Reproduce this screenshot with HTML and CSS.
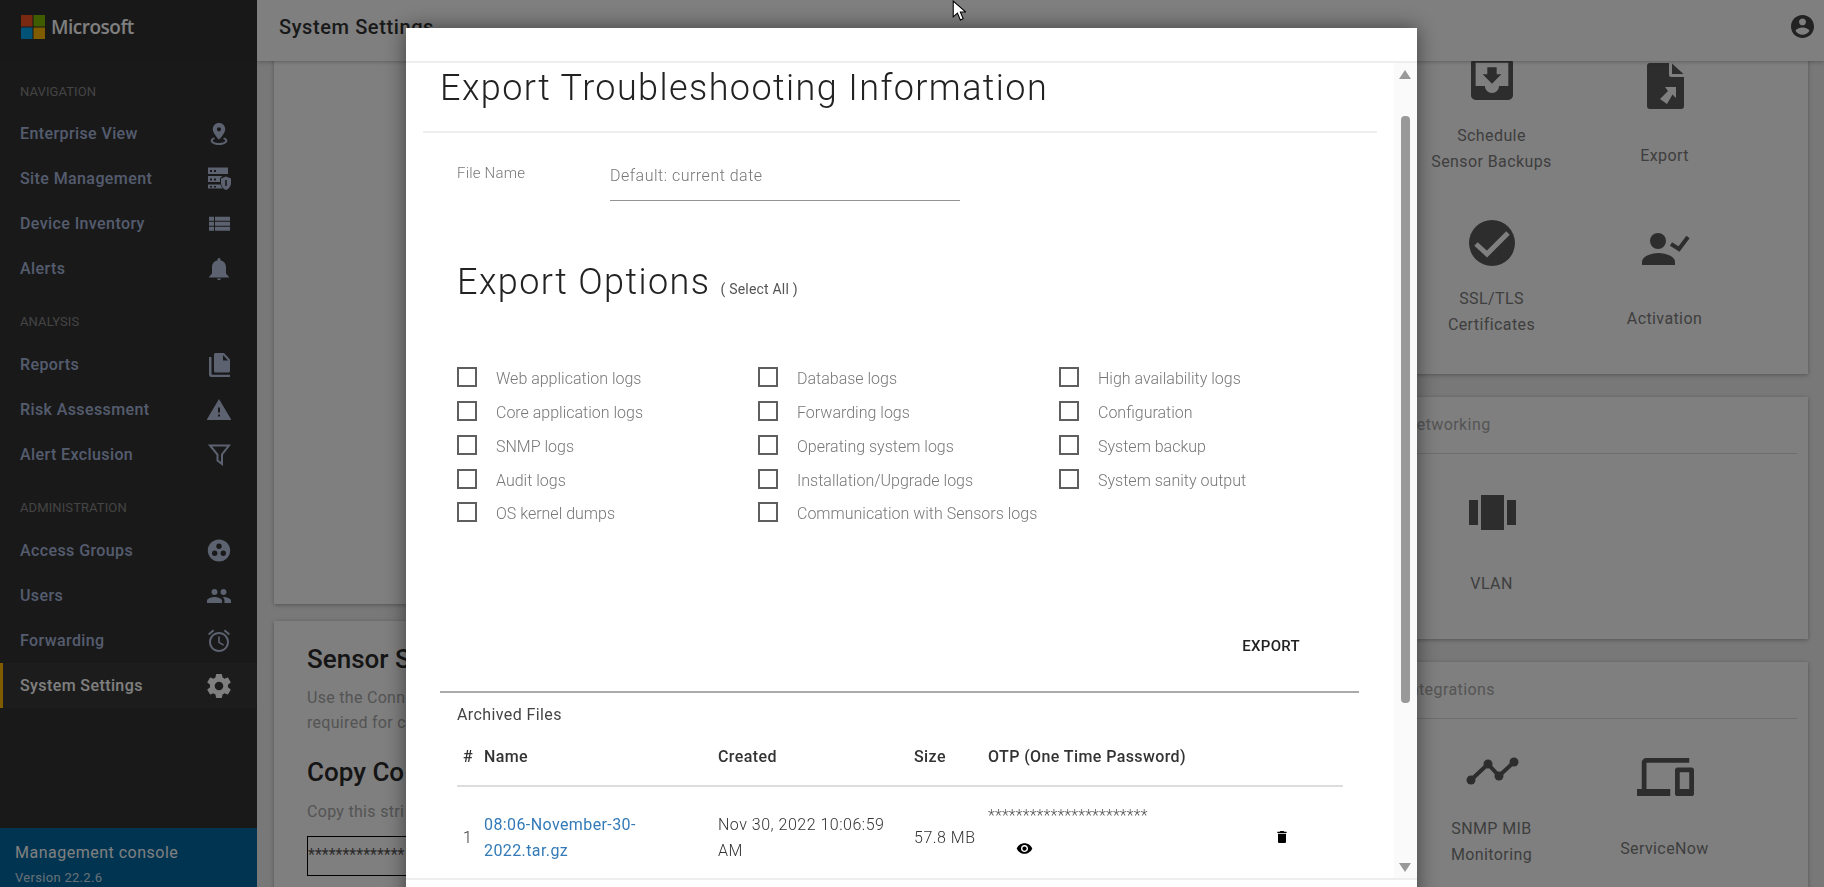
FILE: index.html
```html
<!DOCTYPE html>
<html>
  <head>
    <title>System Settings</title>
    <link rel="stylesheet" href="styles.css">
  </head>
  <body>
    <div class="app">
      <aside class="sidebar">
        <div class="brand">
          <svg class="ms-logo" viewBox="0 0 24 24" width="24" height="24">
            <rect x="0" y="0" width="11.5" height="11.5" fill="#f25022"></rect>
            <rect x="12.5" y="0" width="11.5" height="11.5" fill="#7fba00"></rect>
            <rect x="0" y="12.5" width="11.5" height="11.5" fill="#00a4ef"></rect>
            <rect x="12.5" y="12.5" width="11.5" height="11.5" fill="#ffb900"></rect>
          </svg>
          <span>Microsoft</span>
        </div>

        <div class="nav-title">NAVIGATION</div>
        <a class="nav-item">Enterprise View
          <svg viewBox="0 0 24 24"><path fill-rule="evenodd" d="M12 1c-3.6 0-6.2 2.7-6.2 6.2 0 4.2 6.2 10.3 6.2 10.3s6.2-6.1 6.2-10.3C18.200 3.700 15.600 1 12 1zm0 4.200a2.100 2.100 0 1 1 0 4.200 2.100 2.100 0 0 1 0-4.200z"></path><path d="M7 15.500c-2 .7-3.300 1.900-3.300 3.200C3.700 21 7.400 23 12 23s8.300-2 8.300-4.300c0-1.300-1.300-2.500-3.300-3.200l-.9 1.500c1.300.4 2.200 1 2.200 1.700 0 1.200-3 2.300-6.300 2.300s-6.300-1.100-6.300-2.300c0-.7.900-1.300 2.200-1.700z"></path></svg>
        </a>
        <a class="nav-item">Site Management
          <svg viewBox="0 0 24 24"><path fill-rule="evenodd" d="M1 .5h20v6.500H1zM3 3v2h2V3zm4 0v2h2V3zM1 9h14.500L13 11.200V15H1zm2 2.500v2h2v-2zm4 0v2h2v-2zM1 17.500h12.500c.4 1.400 1 2.800 2 4H1zM3 19v1.500h2V19zm4 0v1.500h2V19z"></path><path fill-rule="evenodd" d="M19 9.500l5 2v4.200c0 3.400-2.200 6.200-5 7.300-2.800-1.100-5-3.900-5-7.300v-4.200zm-.8 3.500v6h1.600v-6z"></path></svg>
        </a>
        <a class="nav-item">Device Inventory
          <svg viewBox="0 0 24 24"><path d="M2 13.800h5v-4H2zm0 5h5v-4H2zm0-10h5v-4H2zm6 5h15v-4H8zm0 5h15v-4H8zm0-14v4h15v-4z"></path></svg>
        </a>
        <a class="nav-item">Alerts
          <svg viewBox="0 0 24 24"><path d="M12 23c1.100 0 2-.7 2-1.500h-4c0 .8.900 1.500 2 1.500zm7-6.500v-6c0-3.600-2-6.500-5.500-7.300V2.500C13.500 1.700 12.800 1 12 1s-1.500.7-1.500 1.500v.7C7 4 5 6.900 5 10.500v6L2 20v.5h20V20z"></path></svg>
        </a>

        <div class="nav-title wide">ANALYSIS</div>
        <a class="nav-item">Reports
          <svg viewBox="0 0 24 24"><path fill-rule="evenodd" d="M8.500 0H17l6 6.500V18a1.500 1.500 0 0 1-1.500 1.500h-13A1.500 1.500 0 0 1 7 18V1.500A1.500 1.500 0 0 1 8.500 0zM16 2v5.500h5z"></path><path d="M2 4h2.500v17a.8.800 0 0 0 .8.800H23V24H4.500A2.500 2.500 0 0 1 2 21.500z"></path></svg>
        </a>
        <a class="nav-item">Risk Assessment
          <svg viewBox="0 0 24 24"><path d="M-.500 22h25L12 1zM13 18.500h-2v-2h2zm0-4h-2v-5h2z"></path></svg>
        </a>
        <a class="nav-item">Alert Exclusion
          <svg viewBox="0 0 24 24"><path fill="none" stroke-width="2" d="M3 2.500h19l-7 9V21l-4.500-3.500v-6z"></path></svg>
        </a>

        <div class="nav-title wide">ADMINISTRATION</div>
        <a class="nav-item">Access Groups
          <svg viewBox="0 0 24 24"><path fill-rule="evenodd" d="M12 .5C5.600.5.800 5.500.800 11.500S5.600 22.500 12 22.500s11.200-5 11.200-11S18.400.5 12 .5zM7.700 17a2.700 2.700 0 0 1 0-5.400 2.700 2.700 0 0 1 0 5.400zM9.300 7.200a2.700 2.700 0 0 1 5.400 0 2.700 2.700 0 0 1-5.400 0zM16.300 17a2.700 2.700 0 0 1 0-5.400 2.700 2.700 0 0 1 0 5.400z"></path></svg>
        </a>
        <a class="nav-item">Users
          <svg viewBox="0 0 24 24"><path d="M16.500 11c1.700 0 3-1.300 3-3s-1.300-3-3-3-3 1.300-3 3 1.300 3 3 3zm-9 0c1.700 0 3-1.300 3-3s-1.300-3-3-3-3 1.300-3 3 1.300 3 3 3zm0 2C5.200 13 0 14.200 0 16.500V19h15v-2.500c0-2.300-5.200-3.500-7.500-3.500zm9 0c-.3 0-.7 0-1 .1 1.200.8 2 2 2 3.400V19H24v-2.500c0-2.300-5.200-3.500-7.500-3.500z"></path></svg>
        </a>
        <a class="nav-item">Forwarding
          <svg viewBox="0 0 24 24"><path d="M23 4.700L18 .5l-1.200 1.500 5 4.200zM7.200 2L6 .5 1 4.700l1.200 1.500zM12.800 7.500h-1.600v6.300l5 3 .8-1.300-4.200-2.500zM12 3C6.500 3 2 7.500 2 13s4.500 10 10 10 10-4.500 10-10S17.500 3 12 3zm0 18c-4.400 0-8-3.600-8-8s3.600-8 8-8 8 3.600 8 8-3.600 8-8 8z"></path></svg>
        </a>
        <a class="nav-item active">System Settings
          <svg viewBox="0 0 24 24"><path d="M20.900 13.200c.1-.4.100-.8.100-1.200s0-.8-.1-1.200l2.500-2a.6.600 0 0 0 .2-.8l-2.400-4.100a.6.600 0 0 0-.7-.3l-3 1.200c-.6-.5-1.300-.9-2-1.200l-.5-3.100a.6.600 0 0 0-.6-.5H9.600a.6.600 0 0 0-.6.500l-.5 3.100c-.7.300-1.400.7-2 1.200l-3-1.200a.6.600 0 0 0-.7.300L.4 8c-.2.300-.1.600.2.800l2.500 2C3 11.200 3 11.600 3 12s0 .8.100 1.200l-2.500 2a.6.600 0 0 0-.2.800l2.400 4.100c.2.300.5.400.7.300l3-1.200c.6.500 1.300.9 2 1.200l.5 3.100c.1.300.3.500.6.500h4.800c.3 0 .5-.2.600-.5l.5-3.100c.7-.3 1.400-.7 2-1.200l3 1.200c.3.100.6 0 .7-.3l2.400-4.100c.2-.3.100-.6-.2-.8zM12 16.300c-2.400 0-4.300-1.900-4.300-4.300S9.600 7.700 12 7.700s4.300 1.900 4.300 4.300-1.900 4.300-4.300 4.300z"></path></svg>
        </a>

        <div class="side-foot">
          <div class="foot-name">Management console</div>
          <div class="foot-version">Version 22.2.6</div>
        </div>
      </aside>

      <div class="main">
        <header class="topbar">
          <h2>System Settings</h2>
          <svg viewBox="2 2 20 20" width="23" height="23"><path d="M12 2C6.480 2 2 6.480 2 12s4.480 10 10 10 10-4.480 10-10S17.520 2 12 2zm0 3c1.660 0 3 1.340 3 3s-1.340 3-3 3-3-1.340-3-3 1.340-3 3-3zm0 14.200c-2.500 0-4.710-1.280-6-3.220.030-1.990 4-3.080 6-3.080 1.990 0 5.970 1.090 6 3.080-1.290 1.940-3.500 3.220-6 3.220z"></path></svg>
        </header>

        <div class="content">
          <div class="col-left">
            <section class="card tall"></section>
            <section class="card setup">
              <h3>Sensor S</h3>
              <p>Use the Conn<br>required for c</p>
              <h3>Copy Co</h3>
              <p class="short">Copy this stri</p>
              <div class="conn-box">**************</div>
            </section>
          </div>

          <div class="col-right">
            <section class="card panel panel-first">
              <div class="tiles">
                <div class="tile">
                  <svg viewBox="0 0 60 60"><path transform="translate(2 -5) scale(2.333)" d="M19 3H4.990c-1.110 0-1.980.890-1.980 2L3 19c0 1.100.880 2 1.990 2H19c1.100 0 2-.900 2-2V5c0-1.110-.900-2-2-2zm0 12h-4c0 1.660-1.350 3-3 3s-3-1.340-3-3H4.990V5H19v10zm-3-5h-2V7h-4v3H8l4 4 4-4z"></path></svg>
                  <div class="tile-label">Schedule<br>Sensor Backups</div>
                </div>
                <div class="tile">
                  <svg viewBox="0 0 60 60"><path fill-rule="evenodd" d="M15 7h19v12a2 2 0 0 0 2 2h13v29a3 3 0 0 1-3 3H15a3 3 0 0 1-3-3V10a3 3 0 0 1 3-3zm15 24h11v11l-3.500-3.500L32 48l-7-5 8-8z"></path><path d="M37 7.500L48.500 18H37z"></path></svg>
                  <div class="tile-label single">Export</div>
                </div>
                <div class="tile">
                  <svg viewBox="0 0 60 60"><circle cx="30" cy="24" r="23"></circle><path class="cut" d="M14 25l11 10 21-21"></path></svg>
                  <div class="tile-label">SSL/TLS<br>Certificates</div>
                </div>
                <div class="tile">
                  <svg viewBox="0 0 60 60"><circle cx="23" cy="22" r="8"></circle><path d="M7 46v-3c0-6 10-9 16.500-9S40 37 40 43v3z"></path><path class="line" d="M36 25l8 5 9-12"></path></svg>
                  <div class="tile-label single">Activation</div>
                </div>
              </div>
            </section>

            <section class="card panel">
              <div class="panel-title">Networking</div>
              <div class="tiles">
                <div class="tile">
                  <svg viewBox="0 0 60 60"><rect x="19" y="11" width="23" height="35"></rect><rect x="7" y="16" width="9" height="25"></rect><rect x="45" y="16" width="9" height="25"></rect></svg>
                  <div class="tile-label single">VLAN</div>
                </div>
              </div>
            </section>

            <section class="card panel">
              <div class="panel-title">Integrations</div>
              <div class="tiles">
                <div class="tile">
                  <svg viewBox="0 0 60 60"><path class="line" d="M9 31l17-16 11 12 15-14"></path><circle cx="9" cy="31" r="4.500"></circle><circle cx="26" cy="15" r="4.500"></circle><circle cx="37" cy="27" r="4.500"></circle><circle cx="52" cy="13" r="4.500"></circle></svg>
                  <div class="tile-label">SNMP MIB<br>Monitoring</div>
                </div>
                <div class="tile">
                  <svg viewBox="0 0 60 60"><path transform="translate(2 -0.500) scale(2.375)" d="M4 6h18V4H4c-1.100 0-2 .900-2 2v11H0v3h14v-3H4V6zm19 2h-6c-.550 0-1 .450-1 1v10c0 .550.450 1 1 1h6c.550 0 1-.450 1-1V9c0-.550-.450-1-1-1zm-1 9h-4v-7h4v7z"></path></svg>
                  <div class="tile-label single">ServiceNow</div>
                </div>
              </div>
            </section>
          </div>
        </div>
      </div>
    </div>

    <div class="overlay">
      <div class="modal">
        <div class="modal-top"></div>
        <div class="modal-body">
          <h1 class="modal-title">Export Troubleshooting Information</h1>

          <div class="file-row">
            <label for="fname">File Name</label>
            <input type="text" id="fname" placeholder="Default: current date">
          </div>

          <h1 class="options-title">Export Options <span>( Select All )</span></h1>

          <div class="options">
            <label class="opt"><input type="checkbox">Web application logs</label>
            <label class="opt"><input type="checkbox">Database logs</label>
            <label class="opt"><input type="checkbox">High availability logs</label>
            <label class="opt"><input type="checkbox">Core application logs</label>
            <label class="opt"><input type="checkbox">Forwarding logs</label>
            <label class="opt"><input type="checkbox">Configuration</label>
            <label class="opt"><input type="checkbox">SNMP logs</label>
            <label class="opt"><input type="checkbox">Operating system logs</label>
            <label class="opt"><input type="checkbox">System backup</label>
            <label class="opt"><input type="checkbox">Audit logs</label>
            <label class="opt"><input type="checkbox">Installation/Upgrade logs</label>
            <label class="opt"><input type="checkbox">System sanity output</label>
            <label class="opt"><input type="checkbox">OS kernel dumps</label>
            <label class="opt"><input type="checkbox">Communication with Sensors logs</label>
          </div>

          <div class="export-row"><button>EXPORT</button></div>
          <hr>
          <div class="archived">Archived Files</div>

          <table>
            <thead>
              <tr>
                <th class="c-num">#</th>
                <th class="c-name">Name</th>
                <th class="c-created">Created</th>
                <th class="c-size">Size</th>
                <th>OTP (One Time Password)</th>
                <th class="c-del"></th>
              </tr>
            </thead>
            <tbody>
              <tr>
                <td>1</td>
                <td class="file-link"><a>08:06-November-30-2022.tar.gz</a></td>
                <td class="created">Nov 30, 2022 10:06:59 AM</td>
                <td>57.8 MB</td>
                <td class="otp">
                  <div class="stars">***********************</div>
                  <svg class="eye" viewBox="0 0 24 24" width="17" height="17"><path d="M12 4.500C7 4.500 2.730 7.610 1 12c1.730 4.390 6 7.500 11 7.500s9.270-3.110 11-7.500c-1.730-4.390-6-7.500-11-7.500zM12 17c-2.760 0-5-2.240-5-5s2.240-5 5-5 5 2.240 5 5-2.240 5-5 5zm0-8c-1.660 0-3 1.340-3 3s1.340 3 3 3 3-1.340 3-3-1.340-3-3-3z"></path></svg>
                </td>
                <td class="trash">
                  <svg viewBox="0 0 24 24" width="16" height="16"><path d="M6 19c0 1.100.900 2 2 2h8c1.100 0 2-.900 2-2V7H6v12zM19 4h-3.500l-1-1h-5l-1 1H5v2h14V4z"></path></svg>
                </td>
              </tr>
            </tbody>
          </table>

          <div class="scrollbar">
            <span class="arrow up"></span>
            <span class="thumb"></span>
            <span class="arrow down"></span>
          </div>
        </div>
        <div class="modal-foot"></div>
      </div>
    </div>

    <svg class="cursor" viewBox="0 0 13 20" width="14" height="21"><path d="M1 1v15l4-3.500 2.800 6.500 2.700-1.200L7.800 11.500H13z"></path></svg>
  </body>
</html>
```

FILE: styles.css
```css
html, body {
  margin: 0;
  height: 100%;
  overflow: hidden;
}

body {
  font-family: Roboto, "Liberation Sans", sans-serif;
  background: #f0f0f0;
}

.app {
  display: flex;
  height: 887px;
}

/* sidebar */
.sidebar {
  width: 257px;
  flex: none;
  display: flex;
  flex-direction: column;
  background: #333;
}

.brand {
  height: 61px;
  display: flex;
  align-items: center;
  gap: 6px;
  padding: 0 0 7px 21px;
  box-sizing: border-box;
  background: #303030;
  color: #fff;
  font-family: "Open Sans", sans-serif;
  font-size: 19px;
  font-weight: 600;
  letter-spacing: -0.5px;
}

.nav-title {
  padding: 21px 20px 9px;
  font-size: 13px;
  line-height: 20px;
  letter-spacing: 0.1px;
  color: #888;
}

.nav-title.wide {
  padding-bottom: 10px;
}

.nav-item {
  height: 45px;
  display: flex;
  align-items: center;
  justify-content: space-between;
  padding: 0 26px 0 20px;
  font-size: 16px;
  font-weight: 500;
  letter-spacing: 0.4px;
  color: #a8b8dc;
}

.nav-item svg {
  width: 24px;
  height: 24px;
  fill: #b8c4df;
  stroke: #b8c4df;
  stroke-width: 0;
}

.nav-item.active {
  padding-left: 17px;
  border-left: 3px solid #ffb900;
  background: #383838;
  color: #fff;
}

.nav-item.active svg {
  fill: #fff;
}

.side-foot {
  margin-top: auto;
  height: 59px;
  box-sizing: border-box;
  padding: 13px 15px 0;
  background: #0068a3;
  color: #fff;
}

.foot-name {
  font-size: 16px;
  line-height: 24px;
  letter-spacing: 0.5px;
}

.foot-version {
  margin-top: 5px;
  font-size: 13px;
  letter-spacing: 0.3px;
  opacity: 0.8;
}

/* page behind the dialog */
.main {
  flex: 1;
  min-width: 0;
  overflow: hidden;
  display: flex;
  flex-direction: column;
}

.topbar {
  position: relative;
  z-index: 2;
  height: 61px;
  flex: none;
  box-sizing: border-box;
  display: flex;
  align-items: center;
  justify-content: space-between;
  padding: 0 10px 8px 22px;
  background: #fff;
  box-shadow: 0 1px 4px rgba(0, 0, 0, 0.25);
}

.topbar h2 {
  margin: 0;
  font-size: 20px;
  font-weight: 500;
  letter-spacing: 0.6px;
  color: #333;
}

.topbar svg {
  fill: #444;
}

.content {
  display: grid;
  grid-template-columns: 1fr 419px;
  column-gap: 16px;
  margin-top: -92px;
  padding: 0 16px 0 17px;
  align-items: start;
}

.col-left {
  display: flex;
  flex-direction: column;
  gap: 17px;
}

.col-right {
  display: flex;
  flex-direction: column;
  gap: 23px;
}

.card {
  background: #fff;
  box-shadow: 0 1px 4px rgba(0, 0, 0, 0.3);
}

.tall {
  height: 635px;
}

.setup {
  height: 400px;
  padding: 21px 0 0 33px;
  box-sizing: border-box;
  white-space: nowrap;
}

.setup h3 {
  margin: 0 0 9px;
  font-size: 26px;
  line-height: 34px;
  font-weight: 500;
  color: #2a2a2a;
}

.setup p {
  margin: 0 0 20px;
  font-size: 16px;
  line-height: 25px;
  letter-spacing: 0.3px;
  color: #a8a8a8;
}

.setup p.short {
  margin: 10px 0 12px;
}

.conn-box {
  height: 38px;
  width: 300px;
  border: 1px solid #000;
  font-size: 16px;
  line-height: 36px;
  color: #555;
}

.panel {
  padding: 16px 11px 36px 16px;
}

.panel-first {
  padding-top: 57px;
}

.panel-title {
  height: 24px;
  padding-bottom: 16px;
  border-bottom: 1px solid #ddd;
  font-size: 16px;
  line-height: 24px;
  letter-spacing: 0.4px;
  color: #aaa;
}

.tiles {
  display: grid;
  grid-template-columns: 173px 173px;
  row-gap: 44px;
  padding: 30px 46px 0 0;
  justify-content: end;
}

.tile {
  display: flex;
  flex-direction: column;
  align-items: center;
}

.tile svg {
  width: 60px;
  height: 60px;
  fill: #5a5a5a;
}

.tile .cut {
  fill: none;
  stroke: #fff;
  stroke-width: 5;
}

.tile .line {
  fill: none;
  stroke: #5a5a5a;
  stroke-width: 4;
}

.tile-label {
  margin-top: 7px;
  height: 52px;
  text-align: center;
  font-size: 16px;
  line-height: 26px;
  letter-spacing: 0.4px;
  color: #7c7c7c;
}

.tile-label.single {
  padding-top: 20px;
  height: 32px;
}

/* dialog */
.overlay {
  position: fixed;
  inset: 0;
  z-index: 10;
  background: rgba(0, 0, 0, 0.5);
  overflow: hidden;
}

.modal {
  position: absolute;
  top: 28px;
  left: 406px;
  width: 1011px;
  background: #fff;
  box-shadow: 0 0 20px rgba(0, 0, 0, 0.5);
}

.modal-top {
  height: 33px;
  border-bottom: 2px solid #eee;
}

.modal-body {
  position: relative;
  height: 815px;
  overflow: hidden;
  padding: 0 40px 0 17px;
}

.modal-foot {
  height: 40px;
  border-top: 2px solid #eee;
}

.modal-title {
  margin: 0;
  padding: 0 0 18px 17px;
  border-bottom: 2px solid #eee;
  font-size: 36px;
  line-height: 50px;
  font-weight: 300;
  letter-spacing: 1.4px;
  color: #222;
}

.file-row {
  display: flex;
  margin: 23px 0 0 34px;
}

.file-row label {
  width: 153px;
  margin-top: 7px;
  font-size: 15px;
  line-height: 20px;
  font-weight: 300;
  letter-spacing: 0.2px;
  color: #777;
}

.file-row input {
  width: 350px;
  height: 45px;
  box-sizing: border-box;
  padding: 0 0 6px;
  border: none;
  border-bottom: 1px solid #949494;
  outline: none;
  font-family: inherit;
  font-size: 16px;
  font-weight: 300;
  letter-spacing: 0.5px;
}

.file-row input::placeholder {
  color: #777;
}

.options-title {
  margin: 56px 0 0 34px;
  font-size: 36px;
  line-height: 50px;
  font-weight: 300;
  letter-spacing: 1.4px;
  color: #222;
}

.options-title span {
  margin-left: 0;
  font-size: 14px;
  font-weight: 400;
  letter-spacing: 0.2px;
  color: #555;
}

.options {
  display: grid;
  grid-template-columns: 301px 301px 301px;
  grid-auto-rows: 33.75px;
  margin: 48px 0 0 34px;
}

.opt {
  display: flex;
  align-items: center;
  font-size: 16px;
  font-weight: 300;
  color: #777;
}

.opt input {
  appearance: none;
  flex: none;
  width: 20px;
  height: 20px;
  margin: -3px 19px 0 0;
  box-sizing: border-box;
  border: 2px solid #5f5f5f;
  background: #fff;
}

.export-row {
  display: flex;
  justify-content: flex-end;
  margin: 97px 77px 0 0;
}

.export-row button {
  height: 36px;
  padding: 0;
  border: none;
  background: none;
  font-family: inherit;
  font-size: 15px;
  font-weight: 500;
  letter-spacing: 0.3px;
  color: #222;
}

hr {
  height: 0;
  margin: 27px 18px 0 17px;
  border: none;
  border-top: 2px solid #aaa;
}

.archived {
  margin: 12px 0 0 34px;
  font-size: 16px;
  line-height: 20px;
  font-weight: 400;
  letter-spacing: 0.4px;
  color: #444;
}

table {
  width: 886px;
  table-layout: fixed;
  border-collapse: collapse;
  margin: 10px 0 0 34px;
}

th {
  padding: 12px 0 18px;
  border-bottom: 2px solid #ddd;
  text-align: left;
  font-size: 16px;
  line-height: 20px;
  font-weight: 500;
  letter-spacing: 0.4px;
  color: #333;
}

td {
  height: 104px;
  box-sizing: border-box;
  padding: 0;
  vertical-align: middle;
  font-size: 16px;
  line-height: 26px;
  font-weight: 300;
  letter-spacing: 0.5px;
  color: #333;
}

.c-num { width: 27px; padding-left: 6px; box-sizing: border-box; }
.c-name { width: 234px; }
.c-created { width: 196px; }
.c-size { width: 74px; }
.c-del { width: 70px; }

td:first-child {
  padding-left: 6px;
}

.file-link {
  padding-right: 60px;
  color: #337ab7;
  font-weight: 400;
  letter-spacing: 0.4px;
}

.created {
  padding-right: 8px;
}

.otp {
  vertical-align: top;
  padding-top: 19px;
}

.stars {
  font-size: 16px;
  line-height: 20px;
  letter-spacing: 0.15px;
  color: #555;
}

.eye {
  display: block;
  margin: 14px 0 0 28px;
}

.trash {
  padding: 3px 0 0 1px;
}

.scrollbar {
  position: absolute;
  top: 0;
  right: 0;
  bottom: 0;
  width: 23px;
  background: #fafafa;
}

.thumb {
  position: absolute;
  top: 53px;
  left: 7px;
  width: 9px;
  height: 587px;
  border-radius: 4px;
  background: #999;
}

.arrow {
  position: absolute;
  left: 5px;
  width: 0;
  height: 0;
  border-left: 6px solid transparent;
  border-right: 6px solid transparent;
}

.arrow.up {
  top: 7px;
  border-bottom: 9px solid #999;
}

.arrow.down {
  bottom: 6px;
  border-top: 9px solid #999;
}

.cursor {
  position: fixed;
  top: 0;
  left: 952px;
  z-index: 20;
  fill: #fff;
  stroke: #000;
  stroke-width: 1;
}
```
